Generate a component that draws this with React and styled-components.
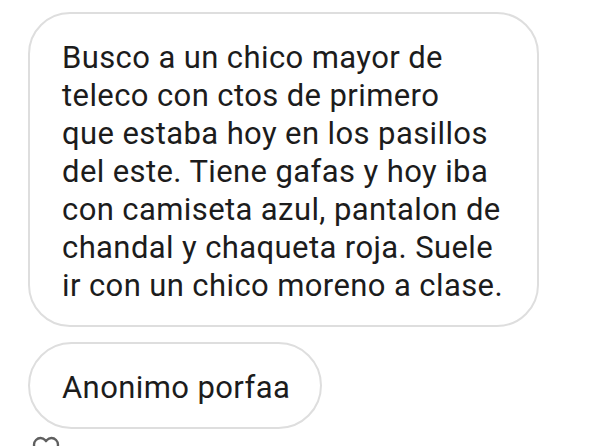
import React from 'react'
import styled, { createGlobalStyle } from 'styled-components'

const GlobalStyle = createGlobalStyle`
  html, body {
    margin: 0;
    padding: 0;
    background: #ffffff;
  }
  body {
    font-family: Roboto, "Noto Sans", "Liberation Sans", sans-serif;
    overflow: hidden;
  }
`

const Thread = styled.div`
  width: 606px;
  height: 446px;
  overflow: hidden;
  padding: 12px 0 0 28px;
  box-sizing: border-box;
  display: flex;
  flex-direction: column;
  align-items: flex-start;
  gap: 15px;
`

const Bubble = styled.div`
  box-sizing: border-box;
  border: 2px solid #dedede;
  border-radius: ${p => (p.$pill ? '44px' : '42px')};
  padding: 25px 28px 20px 32px;
  background: #fff;
  color: #1c1c1c;
  font-size: 31px;
  line-height: 38px;
  letter-spacing: 0.4px;
  width: ${p => p.$width || 'auto'};
  height: ${p => p.$height || 'auto'};
`

const Line = styled.div`
  white-space: nowrap;
`

const Reaction = styled.div`
  margin-top: -9px;
  margin-left: 3px;
  color: #5f5f5f;
  display: flex;
`

const lines = [
  'Busco a un chico mayor de',
  'teleco con ctos de primero',
  'que estaba hoy en los pasillos',
  'del este. Tiene gafas y hoy iba',
  'con camiseta azul, pantalon de',
  'chandal y chaqueta roja. Suele',
  'ir con un chico moreno a clase.',
]

const App = () => {
  return (
    <>
      <GlobalStyle />
      <Thread>
        <Bubble $width="511px" $height="317px">
          {lines.map(l => (
            <Line key={l}>{l}</Line>
          ))}
        </Bubble>
        <Bubble $pill $height="88px" $width="294px">
          <Line>Anonimo porfaa</Line>
        </Bubble>
        <Reaction>
          <svg width="30" height="26" viewBox="0 0 24 22" fill="none">
            <path
              d="M12 20.5 L3.5 12.2 C1.3 10 1.3 6.4 3.5 4.2 C5.7 2 9.2 2 11.2 4.3 L12 5.2 L12.8 4.3 C14.8 2 18.3 2 20.5 4.2 C22.7 6.4 22.7 10 20.5 12.2 Z"
              stroke="currentColor"
              strokeWidth="2"
              strokeLinejoin="round"
            />
          </svg>
        </Reaction>
      </Thread>
    </>
  )
}

export default App
